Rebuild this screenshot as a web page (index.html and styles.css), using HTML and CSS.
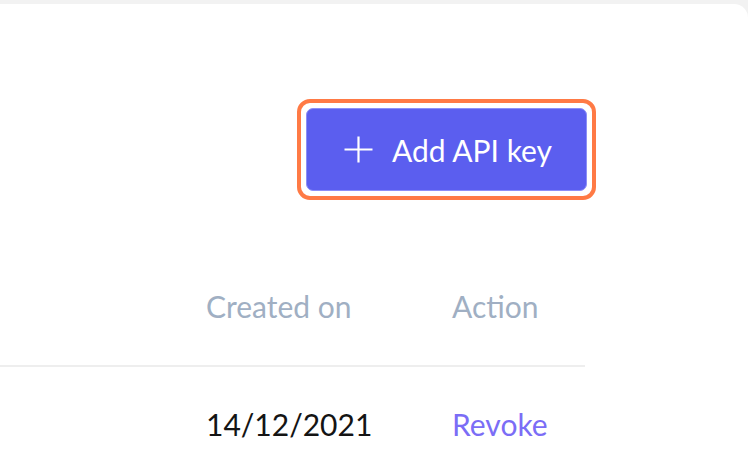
FILE: index.html
```html
<!DOCTYPE html>
<html lang="en">
<head>
<meta charset="utf-8">
<title>API keys</title>
<link rel="stylesheet" href="styles.css">
</head>
<body>
<main class="card">
  <div class="toolbar">
    <div class="focus-ring">
      <button class="btn-primary" type="button">
        <svg class="plus" width="29" height="27" viewBox="0 0 29 27" aria-hidden="true">
          <path d="M14.5 0.5V26.5M0.5 13.5H28.5" stroke="#fff" stroke-width="2.2" fill="none"/>
        </svg>
        <span>Add API key</span>
      </button>
    </div>
  </div>
  <div class="table">
    <div class="row head">
      <div class="cell"></div>
      <div class="cell">Created on</div>
      <div class="cell">Action</div>
    </div>
    <div class="row body">
      <div class="cell"></div>
      <div class="cell date">14/12/2021</div>
      <div class="cell"><a class="revoke" href="#">Revoke</a></div>
    </div>
  </div>
</main>
</body>
</html>
```
FILE: styles.css
```css
* { box-sizing: border-box; }
html, body { height: 100%; }
body {
  margin: 0;
  background: #f2f2f2;
  font-family: Lato, "Noto Sans", sans-serif;
  overflow: hidden;
}
.card {
  margin-top: 4px;
  height: calc(100% - 4px);
  background: #fff;
  border-top-right-radius: 14px;
  padding-right: 161px;
}
.toolbar {
  display: flex;
  justify-content: flex-end;
  padding-top: 95px;
}
.focus-ring {
  padding: 5px;
  border: 4px solid #ff7a45;
  border-radius: 13px;
  background: #fff;
  margin-right: -9px;
}
.btn-primary {
  display: flex;
  align-items: center;
  gap: 19px;
  height: 83px;
  padding: 0 34px 0 37px;
  background: #5b5eef;
  border: 1px solid #8c8ff6;
  border-radius: 7px;
  color: #fff;
  font-family: Lato, "Noto Sans", sans-serif;
  font-size: 30px;
  cursor: pointer;
}
.plus { display: block; }
.table {
  margin-top: 86px;
  width: 585px;
}
.row {
  display: grid;
  grid-template-columns: 206px 246px 133px;
  font-size: 30px;
  line-height: 40px;
}
.row.head {
  color: #a0afc3;
  padding-bottom: 39px;
  border-bottom: 2px solid #eeeeee;
}
.row.body {
  padding-top: 37px;
  color: #141414;
}
.revoke {
  color: #7b6df6;
  text-decoration: none;
}
```
